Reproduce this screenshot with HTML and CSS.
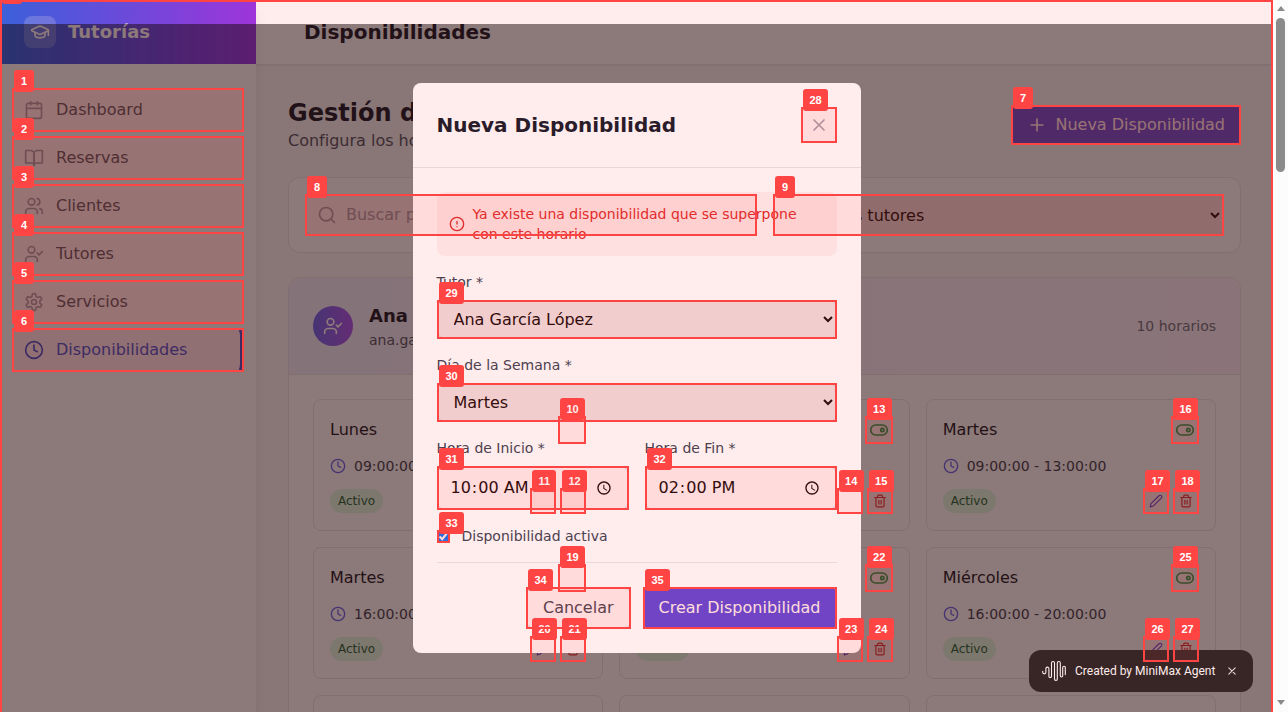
FILE: index.html
```html
<!DOCTYPE html>
<html lang="es">
<head>
<meta charset="utf-8">
<title>Disponibilidades</title>
<link rel="stylesheet" href="styles.css">
</head>
<body>
<svg class="sprite" aria-hidden="true">
  <symbol id="cap" viewBox="0 0 24 24"><path d="M21.42 10.922a1 1 0 0 0-.019-1.838L12.83 5.18a2 2 0 0 0-1.66 0L2.6 9.08a1 1 0 0 0 0 1.832l8.57 3.908a2 2 0 0 0 1.66 0z"/><path d="M22 10v6"/><path d="M6 12.5V16a6 3 0 0 0 12 0v-3.5"/></symbol>
  <symbol id="calendar" viewBox="0 0 24 24"><path d="M8 2v4M16 2v4M3 10h18"/><rect x="3" y="4" width="18" height="18" rx="2"/></symbol>
  <symbol id="book" viewBox="0 0 24 24"><path d="M2 3h6a4 4 0 0 1 4 4v14a3 3 0 0 0-3-3H2z"/><path d="M22 3h-6a4 4 0 0 0-4 4v14a3 3 0 0 1 3-3h7z"/></symbol>
  <symbol id="users" viewBox="0 0 24 24"><path d="M16 21v-2a4 4 0 0 0-4-4H6a4 4 0 0 0-4 4v2"/><circle cx="9" cy="7" r="4"/><path d="M22 21v-2a4 4 0 0 0-3-3.87M16 3.13a4 4 0 0 1 0 7.75"/></symbol>
  <symbol id="user-check" viewBox="0 0 24 24"><path d="M16 21v-2a4 4 0 0 0-4-4H6a4 4 0 0 0-4 4v2"/><circle cx="9" cy="7" r="4"/><path d="m16 11 2 2 4-4"/></symbol>
  <symbol id="settings" viewBox="0 0 24 24"><path d="M12.22 2h-.44a2 2 0 0 0-2 2v.18a2 2 0 0 1-1 1.73l-.43.25a2 2 0 0 1-2 0l-.15-.08a2 2 0 0 0-2.73.73l-.22.38a2 2 0 0 0 .73 2.73l.15.1a2 2 0 0 1 1 1.72v.51a2 2 0 0 1-1 1.74l-.15.09a2 2 0 0 0-.73 2.73l.22.38a2 2 0 0 0 2.73.73l.15-.08a2 2 0 0 1 2 0l.43.25a2 2 0 0 1 1 1.73V20a2 2 0 0 0 2 2h.44a2 2 0 0 0 2-2v-.18a2 2 0 0 1 1-1.73l.43-.25a2 2 0 0 1 2 0l.15.08a2 2 0 0 0 2.73-.73l.22-.39a2 2 0 0 0-.73-2.73l-.15-.08a2 2 0 0 1-1-1.74v-.5a2 2 0 0 1 1-1.74l.15-.09a2 2 0 0 0 .73-2.73l-.22-.38a2 2 0 0 0-2.73-.73l-.15.08a2 2 0 0 1-2 0l-.43-.25a2 2 0 0 1-1-1.73V4a2 2 0 0 0-2-2z"/><circle cx="12" cy="12" r="3"/></symbol>
  <symbol id="clock" viewBox="0 0 24 24"><circle cx="12" cy="12" r="10"/><path d="M12 6v6l4 2"/></symbol>
  <symbol id="plus" viewBox="0 0 24 24"><path d="M5 12h14M12 5v14"/></symbol>
  <symbol id="search" viewBox="0 0 24 24"><circle cx="11" cy="11" r="8"/><path d="m21 21-4.3-4.3"/></symbol>
  <symbol id="toggle" viewBox="0 0 24 24"><rect x="2" y="6" width="20" height="12" rx="6"/><circle cx="16" cy="12" r="2"/></symbol>
  <symbol id="pencil" viewBox="0 0 24 24"><path d="M17 3a2.83 2.83 0 1 1 4 4L7.5 20.5 2 22l1.5-5.5z"/></symbol>
  <symbol id="trash" viewBox="0 0 24 24"><path d="M3 6h18M19 6v14a2 2 0 0 1-2 2H7a2 2 0 0 1-2-2V6M8 6V4a2 2 0 0 1 2-2h4a2 2 0 0 1 2 2v2M10 11v6M14 11v6"/></symbol>
  <symbol id="alert" viewBox="0 0 24 24"><circle cx="12" cy="12" r="10"/><path d="M12 8v4M12 16h.01"/></symbol>
  <symbol id="x" viewBox="0 0 24 24"><path d="M18 6 6 18M6 6l12 12"/></symbol>
</svg>

<div class="viewport">
  <div class="app">
    <aside class="sidebar">
      <div class="brand">
        <span class="brand-mark"><svg class="icon i20"><use href="#cap"/></svg></span>
        <span class="brand-name">Tutorías</span>
      </div>
      <nav class="nav">
        <a class="nav-item"><svg class="icon i20"><use href="#calendar"/></svg>Dashboard</a>
        <a class="nav-item"><svg class="icon i20"><use href="#book"/></svg>Reservas</a>
        <a class="nav-item"><svg class="icon i20"><use href="#users"/></svg>Clientes</a>
        <a class="nav-item"><svg class="icon i20"><use href="#user-check"/></svg>Tutores</a>
        <a class="nav-item"><svg class="icon i20"><use href="#settings"/></svg>Servicios</a>
        <a class="nav-item active"><svg class="icon i20"><use href="#clock"/></svg>Disponibilidades</a>
      </nav>
    </aside>

    <div class="content">
      <header class="topbar"><h1>Disponibilidades</h1></header>
      <main class="main">
        <div class="page-head">
          <div>
            <h2>Gestión de Disponibilidades</h2>
            <p>Configura los horarios de los tutores</p>
          </div>
          <button class="btn-new"><svg class="icon i20"><use href="#plus"/></svg>Nueva Disponibilidad</button>
        </div>

        <div class="filters">
          <div class="search">
            <svg class="icon i20"><use href="#search"/></svg>
            <span>Buscar por tutor...</span>
          </div>
          <select class="filter-select"><option>Todos los tutores</option></select>
        </div>

        <section class="tutor">
          <div class="tutor-head">
            <div class="avatar"><svg class="icon i20"><use href="#user-check"/></svg></div>
            <div class="tutor-info">
              <h3>Ana García López</h3>
              <p>ana.garcia@email.com</p>
            </div>
            <span class="tutor-count">10 horarios</span>
          </div>
          <div class="slots" id="slots"></div>
        </section>
      </main>
    </div>
  </div>

  <div class="backdrop">
    <div class="modal">
      <div class="modal-head">
        <h2>Nueva Disponibilidad</h2>
        <button class="close"><svg class="icon i20"><use href="#x"/></svg></button>
      </div>
      <form class="form">
        <div class="alert"><svg class="icon i16"><use href="#alert"/></svg><span>Ya existe una disponibilidad que se superpone con este horario</span></div>
        <div class="field"><label>Tutor *</label><select class="select"><option>Ana García López</option></select></div>
        <div class="field"><label>Día de la Semana *</label><select class="select"><option>Martes</option></select></div>
        <div class="pair">
          <div class="field"><label>Hora de Inicio *</label><input class="time" type="time" value="10:00"></div>
          <div class="field"><label>Hora de Fin *</label><input class="time" type="time" value="14:00"></div>
        </div>
        <div class="check"><input type="checkbox" checked><label>Disponibilidad activa</label></div>
        <div class="actions">
          <button type="button" class="cancel">Cancelar</button>
          <button type="button" class="create">Crear Disponibilidad</button>
        </div>
      </form>
    </div>
  </div>

  <div class="toast">
    <svg class="wave" viewBox="0 0 24 22"><path d="M.7 11.200v1.100a1.600 1.600 0 0 0 3.200 0V8.600a1.500 1.500 0 0 1 3 0v7.600a1.300 1.300 0 0 0 2.600 0V3a1.500 1.500 0 0 1 3 0v16a1.300 1.300 0 0 0 2.800 0V3a1.500 1.500 0 0 1 3 0v12.800a1.200 1.200 0 0 0 2.400 0V7.600a1.300 1.300 0 0 1 2.600 0v7"/></svg>
    <span>Created by MiniMax Agent</span>
    <svg class="toast-x" viewBox="0 0 8 8"><path d="m.8.8 6.400 6.400M7.200.8.8 7.200"/></svg>
  </div>

  <div class="marks" id="marks"></div>
</div>

<div class="scrollbar"><i class="arrow up"></i><i class="thumb"></i><i class="arrow down"></i></div>
<script src="app.js"></script>
</body>
</html>
```

FILE: styles.css
```css
* { box-sizing: border-box; margin: 0; padding: 0; }
html, body { height: 100%; overflow: hidden; }
body { display: flex; font: 16px/24px "DejaVu Sans", sans-serif; color: #111827; background: #fff; }
button, select, input { font: inherit; }
button { border: 0; background: none; }
.sprite { display: none; }
.icon { fill: none; stroke: currentColor; stroke-width: 2; stroke-linecap: round; stroke-linejoin: round; flex: none; display: block; }
.i14 { width: 14px; height: 14px; }
.i16 { width: 16px; height: 16px; }
.i20 { width: 20px; height: 20px; }

.viewport { position: relative; flex: 1; min-width: 0; height: 712px; overflow: hidden; }
.app { display: flex; height: 100%; background: #f9fafb; }

/* Sidebar */
.sidebar { position: relative; z-index: 1; width: 256px; flex: none; background: #fff; box-shadow: 0 10px 15px -3px rgba(0,0,0,.1), 0 4px 6px -4px rgba(0,0,0,.1); }
.brand { display: flex; align-items: center; gap: 12px; height: 64px; padding: 0 24px; background: linear-gradient(to right, #2563eb, #9333ea); color: #fff; }
.brand-mark { display: grid; place-items: center; width: 32px; height: 32px; border-radius: 8px; background: rgba(255,255,255,.2); }
.brand-name { font-size: 18px; line-height: 28px; font-weight: 700; }
.nav { display: flex; flex-direction: column; gap: 4px; padding: 24px 12px; }
.nav-item { display: flex; align-items: center; gap: 12px; height: 44px; padding: 0 12px; border-radius: 8px; color: #4b5563; }
.nav-item .icon { color: #9ca3af; }
.nav-item.active { background: #eff6ff; color: #1d4ed8; border-right: 4px solid #1d4ed8; }
.nav-item.active .icon { color: #1d4ed8; }

/* Page */
.content { flex: 1; min-width: 0; }
.topbar { display: flex; align-items: center; height: 65px; padding: 0 48px; background: #fff; border-bottom: 1px solid #e5e7eb; box-shadow: 0 1px 2px rgba(0,0,0,.05); }
.topbar h1 { font-size: 20px; line-height: 28px; }
.main { display: flex; flex-direction: column; gap: 24px; padding: 32px; }
.page-head { display: flex; align-items: center; justify-content: space-between; height: 56px; }
.page-head h2 { font-size: 24px; line-height: 32px; }
.page-head p { color: #4b5563; }
.btn-new { display: flex; align-items: center; gap: 8px; height: 40px; padding: 0 16px; border-radius: 8px; background: #4f46e5; color: #fff; white-space: nowrap; }
.filters { display: grid; grid-template-columns: 1fr 1fr; gap: 16px; padding: 16px; background: #fff; border: 1px solid #e5e7eb; border-radius: 12px; }
.search { display: flex; align-items: center; gap: 9px; height: 42px; padding: 0 11px; border: 1px solid #d1d5db; border-radius: 8px; color: #9ca3af; }
.filter-select { height: 42px; padding: 0 12px; border: 1px solid #d1d5db; border-radius: 8px; background-color: #efefef; color: #000; }

.tutor { background: #fff; border: 1px solid #e5e7eb; border-radius: 12px; overflow: hidden; }
.tutor-head { display: flex; align-items: center; gap: 16px; padding: 24px; border-bottom: 1px solid #e5e7eb; background: linear-gradient(to right, #eef2ff, #faf5ff); }
.avatar { display: grid; place-items: center; width: 40px; height: 40px; border-radius: 50%; background: linear-gradient(to right, #6366f1, #a855f7); color: #fff; }
.tutor-info { flex: 1; }
.tutor-info h3 { font-size: 18px; line-height: 28px; }
.tutor-info p { font-size: 14px; line-height: 20px; color: #4b5563; }
.tutor-count { font-size: 14px; line-height: 20px; color: #6b7280; }
.slots { display: grid; grid-template-columns: repeat(3, 1fr); gap: 16px; padding: 24px; }
.slot { display: flex; flex-direction: column; gap: 12px; padding: 16px; border: 1px solid #e5e7eb; border-radius: 8px; }
.slot-row { display: flex; align-items: center; justify-content: space-between; }
.slot-toggle { padding: 4px; color: #16a34a; }
.slot-time { display: flex; align-items: center; gap: 8px; font-size: 14px; line-height: 20px; color: #374151; }
.slot-time .icon { color: #6366f1; }
.badge { padding: 4px 8px; border-radius: 12px; background: #dcfce7; color: #166534; font-size: 12px; line-height: 16px; }
.slot-tools { display: flex; gap: 4px; }
.slot-tools button { padding: 6px; }
.edit { color: #4f46e5; }
.remove { color: #dc2626; }

/* Modal */
.backdrop { position: absolute; z-index: 2; inset: 24px 0 0; display: flex; align-items: center; justify-content: center; background: rgba(0,0,0,.5); }
.modal { width: 448px; border-radius: 8px; background: #fff; }
.modal-head { display: flex; align-items: center; justify-content: space-between; padding: 24px; border-bottom: 1px solid #e5e7eb; }
.modal-head h2 { font-size: 20px; line-height: 28px; }
.close { padding: 8px; color: #9ca3af; }
.form { display: flex; flex-direction: column; gap: 16px; padding: 24px; }
.alert { display: flex; align-items: center; gap: 8px; padding: 12px; border-radius: 8px; background: #fef2f2; color: #dc2626; font-size: 14px; line-height: 20px; }
.field { display: flex; flex-direction: column; gap: 8px; min-width: 0; }
.field label, .check label { font-size: 14px; line-height: 20px; color: #374151; }
.select { height: 39px; padding: 0 12px; border: 1px solid #d1d5db; border-radius: 8px; background-color: #efefef; color: #000; }
.pair { display: grid; grid-template-columns: 1fr 1fr; gap: 16px; }
.time { height: 44px; padding: 0 12px; border: 1px solid #d1d5db; border-radius: 8px; background: #fff; color: #000; }
.check { display: flex; align-items: center; gap: 12px; height: 20px; }
.check input { width: 13px; height: 13px; }
.actions { display: flex; justify-content: flex-end; gap: 12px; padding-top: 24px; border-top: 1px solid #e5e7eb; }
.actions button { height: 42px; padding: 0 16px; border-radius: 8px; white-space: nowrap; }
.actions .cancel { border: 1px solid #d1d5db; color: #374151; }
.actions .create { background: #4f46e5; color: #fff; }

/* Toast */
.toast { position: absolute; z-index: 3; right: 20px; bottom: 20px; display: flex; align-items: center; width: 224px; height: 42px; padding: 0 17px 0 13px; border-radius: 12px; background: #222; color: #fff; font: 400 12px/16px Roboto, sans-serif; }
.toast svg { fill: none; stroke: #fff; stroke-width: 1.1; stroke-linecap: round; flex: none; }
.toast .wave { width: 24px; height: 22px; }
.toast span { flex: 1; margin-left: 9px; white-space: nowrap; }
.toast .toast-x { width: 8px; height: 8px; stroke-width: 1.2; opacity: .85; }

/* Numbered element markers */
.marks { position: absolute; z-index: 4; inset: 0; }
.mark { position: absolute; border: 2px solid #f44; background: rgba(255,68,68,.1); }
.mark b { position: absolute; left: 0; top: -20px; min-width: 20px; height: 22px; padding: 4px 6.4px; border-radius: 3px; background: #f44; color: #fff; font: 700 11px/15px "Liberation Sans", sans-serif; text-align: center; }

/* Scrollbar */
.scrollbar { display: flex; flex-direction: column; align-items: center; width: 15px; height: 712px; padding: 6px 0 7px; background: #fcfcfc; }
.arrow { border: 4.5px solid transparent; border-top: 0; border-bottom: 5px solid #8b8b8b; }
.arrow.down { margin-top: auto; border-bottom: 0; border-top: 5px solid #8b8b8b; }
.thumb { width: 9px; height: 154px; margin-top: 7px; border-radius: 5px; background: #8b8b8b; }
```

FILE: app.js
```js
const slots = [
  ["Lunes", "09:00:00 - 13:00:00"],
  ["Lunes", "16:00:00 - 20:00:00"],
  ["Martes", "09:00:00 - 13:00:00"],
  ["Martes", "16:00:00 - 20:00:00"],
  ["Miércoles", "09:00:00 - 13:00:00"],
  ["Miércoles", "16:00:00 - 20:00:00"],
  ["Jueves", "09:00:00 - 13:00:00"],
  ["Jueves", "16:00:00 - 20:00:00"],
  ["Viernes", "09:00:00 - 13:00:00"]
];
document.getElementById("slots").innerHTML = slots.map(([day, time]) => `
  <article class="slot">
    <div class="slot-row"><span>${day}</span><button class="slot-toggle"><svg class="icon i20"><use href="#toggle"/></svg></button></div>
    <div class="slot-time"><svg class="icon i16"><use href="#clock"/></svg>${time}</div>
    <div class="slot-row"><span class="badge">Activo</span><div class="slot-tools">
      <button class="edit"><svg class="icon i14"><use href="#pencil"/></svg></button>
      <button class="remove"><svg class="icon i14"><use href="#trash"/></svg></button>
    </div></div>
  </article>`).join("");

// Each marker: x, y, width, height; its number is its index.
const marks = [
  [0, 0, 1273, 1200],
  [12, 88, 232, 44], [12, 136, 232, 44], [12, 184, 232, 44],
  [12, 232, 232, 44], [12, 280, 232, 44], [12, 328, 232, 44],
  [1011, 105, 230, 40],
  [305, 194, 452, 42], [773, 194, 451, 42]
];
for (const dy of [0, 148]) {
  for (const x of [558, 864.67, 1171]) {
    marks.push([x, 416 + dy, 28, 28], [x - 28, 488 + dy, 26, 26], [x + 2, 488 + dy, 26, 26]);
  }
}
marks.push(
  [801, 107, 36, 36],
  [437, 300, 400, 39], [437, 383, 400, 39],
  [437, 466, 192, 44], [645, 466, 192, 44],
  [437, 530, 13, 13],
  [526, 587, 105, 42], [643, 587, 194, 42]
);
document.getElementById("marks").innerHTML = marks.map(([x, y, w, h], i) =>
  `<div class="mark" style="left:${x}px;top:${y}px;width:${w}px;height:${h}px"><b>${i}</b></div>`).join("");
```
